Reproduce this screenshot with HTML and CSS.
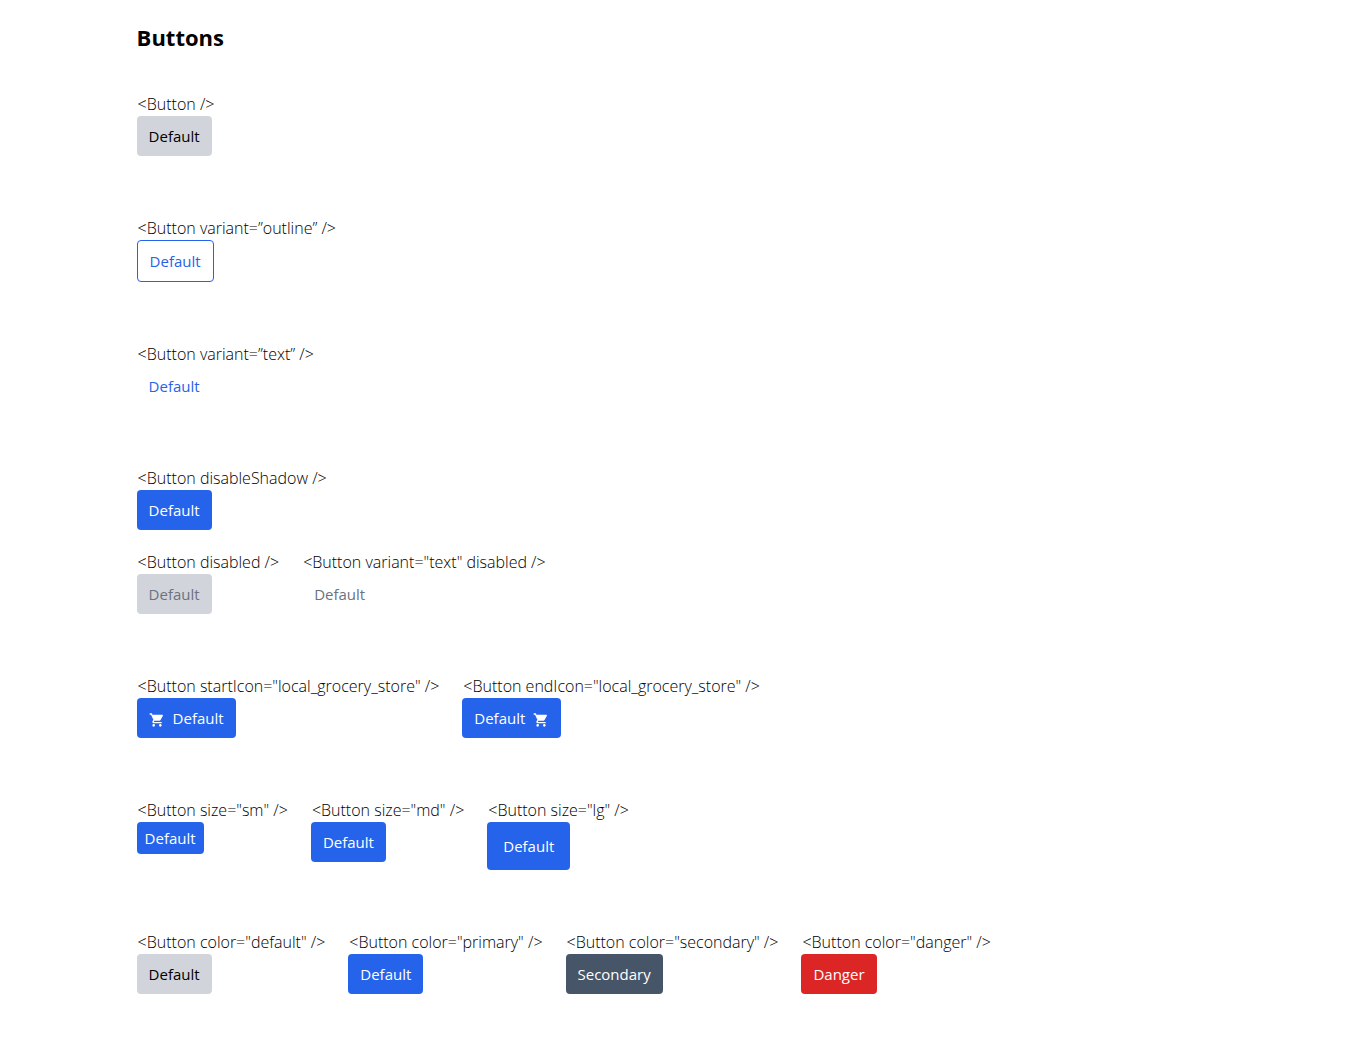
FILE: index.html
```html
<!DOCTYPE html>
<html lang="en">
<head>
<meta charset="utf-8">
<meta name="viewport" content="width=device-width, initial-scale=1">
<title>Buttons</title>
<link rel="stylesheet" href="styles.css">
</head>
<body>
<svg class="sprite" aria-hidden="true">
  <symbol id="cart" viewBox="0 0 24 24"><path d="M7 18c-1.100 0-1.990.9-1.990 2S5.900 22 7 22s2-.9 2-2-.9-2-2-2zM1 2v2h2l3.600 7.590-1.350 2.450c-.16.280-.25.610-.25.960 0 1.100.9 2 2 2h12v-2H7.420c-.14 0-.25-.11-.25-.25l.03-.12.900-1.630h7.450c.75 0 1.410-.41 1.750-1.030l3.580-6.490c.08-.14.12-.31.12-.480 0-.55-.45-1-1-1H5.210l-.94-2H1zm16 16c-1.100 0-1.990.9-1.990 2s.89 2 1.990 2 2-.9 2-2-.9-2-2-2z"/></symbol>
</svg>
<main class="page">
  <h1 class="title">Buttons</h1>

  <section class="row">
    <div class="item"><span class="code">&lt;Button /&gt;</span><button class="btn" type="button">Default</button></div>
  </section>

  <section class="row">
    <div class="item"><span class="code">&lt;Button variant=”outline” /&gt;</span><button class="btn btn-outline" type="button">Default</button></div>
  </section>

  <section class="row">
    <div class="item"><span class="code">&lt;Button variant=”text” /&gt;</span><button class="btn btn-text" type="button">Default</button></div>
  </section>

  <section class="row row-tight">
    <div class="item"><span class="code">&lt;Button disableShadow /&gt;</span><button class="btn btn-primary" type="button">Default</button></div>
  </section>

  <section class="row">
    <div class="item"><span class="code">&lt;Button disabled /&gt;</span><button class="btn" type="button" disabled>Default</button></div>
    <div class="item"><span class="code">&lt;Button variant="text" disabled /&gt;</span><button class="btn btn-text" type="button" disabled>Default</button></div>
  </section>

  <section class="row">
    <div class="item"><span class="code">&lt;Button startIcon="local_grocery_store" /&gt;</span><button class="btn btn-primary" type="button"><svg class="icon" aria-hidden="true"><use href="#cart"/></svg>Default</button></div>
    <div class="item"><span class="code">&lt;Button endIcon="local_grocery_store" /&gt;</span><button class="btn btn-primary" type="button">Default<svg class="icon" aria-hidden="true"><use href="#cart"/></svg></button></div>
  </section>

  <section class="row">
    <div class="item"><span class="code">&lt;Button size="sm" /&gt;</span><button class="btn btn-primary btn-sm" type="button">Default</button></div>
    <div class="item"><span class="code">&lt;Button size="md" /&gt;</span><button class="btn btn-primary" type="button">Default</button></div>
    <div class="item"><span class="code">&lt;Button size="lg" /&gt;</span><button class="btn btn-primary btn-lg" type="button">Default</button></div>
  </section>

  <section class="row">
    <div class="item"><span class="code">&lt;Button color="default" /&gt;</span><button class="btn" type="button">Default</button></div>
    <div class="item"><span class="code">&lt;Button color="primary" /&gt;</span><button class="btn btn-primary" type="button">Default</button></div>
    <div class="item"><span class="code">&lt;Button color="secondary" /&gt;</span><button class="btn btn-secondary" type="button">Secondary</button></div>
    <div class="item"><span class="code">&lt;Button color="danger" /&gt;</span><button class="btn btn-danger" type="button">Danger</button></div>
  </section>
</main>
</body>
</html>
```
FILE: styles.css
```css
* { box-sizing: border-box; }

body {
  margin: 0;
  background: #fff;
  color: #000;
  font: 400 15px/24px "Segoe UI", "Open Sans", "Noto Sans", sans-serif;
}

.sprite { display: none; }

.page { padding: 20px 10% 0; }

.title {
  margin: 0 0 38px;
  font-size: 22px;
  line-height: 34px;
  font-weight: 700;
}

.row {
  display: flex;
  flex-wrap: wrap;
  align-items: flex-start;
  column-gap: 22px;
  margin-bottom: 60px;
}

.row-tight { margin-bottom: 20px; }

.item {
  display: flex;
  flex-direction: column;
  align-items: flex-start;
}

.code {
  padding: 0 1px;
  font-size: 16px;
  font-weight: 350;
  white-space: nowrap;
}

.btn {
  display: inline-flex;
  align-items: center;
  gap: 8px;
  margin: 0;
  padding: 8px 12px;
  border: 0;
  border-radius: 4px;
  background: #d1d5db;
  color: #000;
  font: inherit;
  cursor: pointer;
}

.btn-outline {
  border: 1px solid #2563eb;
  background: #fff;
  color: #2563eb;
}

.btn-text {
  background: transparent;
  color: #2563eb;
}

.btn-primary { background: #2563eb; color: #fff; }
.btn-secondary { background: #475569; color: #fff; }
.btn-danger { background: #dc2626; color: #fff; }

.btn-sm { padding: 4px 8px; }
.btn-lg { padding: 12px 16px; }

.btn:disabled { color: #6b7280; cursor: default; }

.icon {
  width: 16px;
  height: 16px;
  margin-top: 3px;
  fill: currentColor;
}
```
